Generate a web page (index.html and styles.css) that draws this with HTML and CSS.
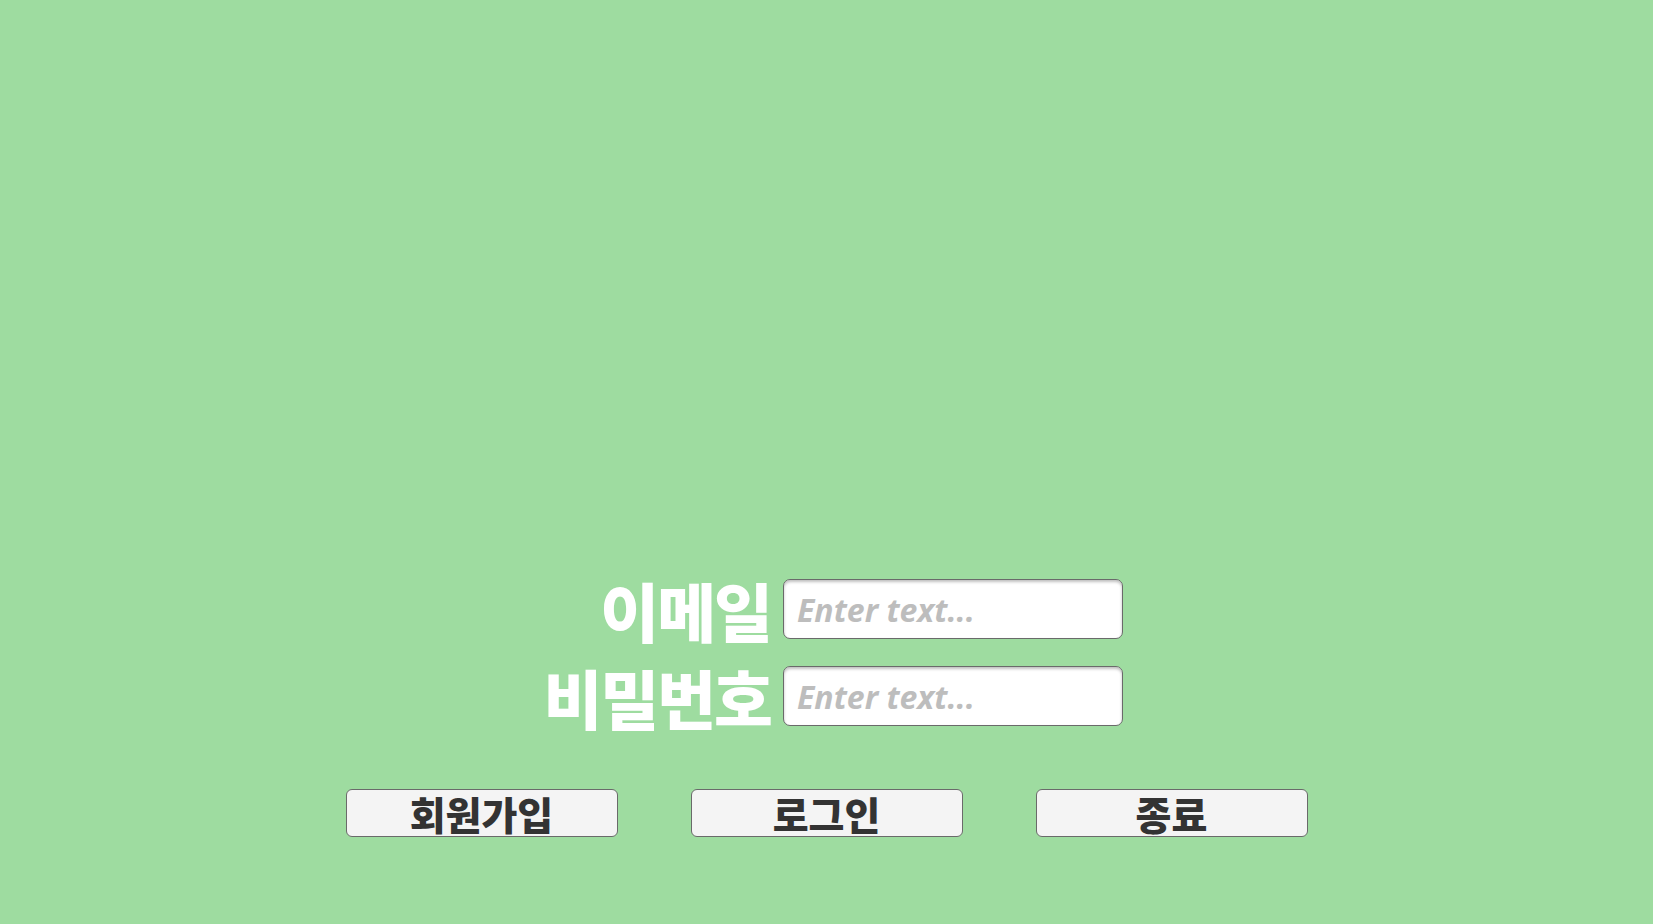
FILE: index.html
```html
<!DOCTYPE html>
<html lang="ko">
<head>
<meta charset="utf-8">
<title>로그인</title>
<link rel="stylesheet" href="styles.css">
</head>
<body>
<main class="screen">
  <form class="login-form">
    <label class="field-label" for="email">이메일</label>
    <input class="field-input" id="email" type="text" placeholder="Enter text...">
    <label class="field-label" for="pw">비밀번호</label>
    <input class="field-input" id="pw" type="text" placeholder="Enter text...">
  </form>
  <div class="actions">
    <button class="action-btn" type="button">회원가입</button>
    <button class="action-btn" type="button">로그인</button>
    <button class="action-btn" type="button">종료</button>
  </div>
</main>
</body>
</html>
```
FILE: styles.css
```css
html, body {
  margin: 0;
  padding: 0;
  background: #9edca0;
}
.screen {
  width: 1653px;
  height: 924px;
  box-sizing: border-box;
  padding-top: 579px;
  display: flex;
  flex-direction: column;
  font-family: "Noto Sans CJK KR", "Noto Sans", sans-serif;
}
.login-form {
  display: grid;
  grid-template-columns: 771px 340px;
  grid-auto-rows: 60px;
  column-gap: 12px;
  row-gap: 27px;
  margin: 0;
}
.field-label {
  justify-self: end;
  align-self: center;
  color: #ffffff;
  font-size: 64px;
  font-weight: 900;
  letter-spacing: -2px;
  line-height: 1;
}
.field-input {
  box-sizing: border-box;
  width: 340px;
  height: 60px;
  border: 1.5px solid #6a6a6a;
  border-radius: 7px;
  background: #ffffff;
  box-shadow: inset 0 2px 3px rgba(0,0,0,0.25);
  padding: 0 13px;
  font-family: "Open Sans", "Noto Sans", sans-serif;
  font-size: 32px;
  font-style: italic;
  font-weight: 700;
  color: #333;
  outline: none;
}
.field-input::placeholder {
  color: #bdbdbd;
}
.actions {
  display: flex;
  justify-content: center;
  gap: 73px;
  margin-top: 63px;
}
.action-btn {
  box-sizing: border-box;
  width: 272px;
  height: 48px;
  border: 1.5px solid #6a6a6a;
  border-radius: 6px;
  background: #f4f4f4;
  color: #333333;
  font-family: "Noto Sans CJK KR", "Noto Sans", sans-serif;
  font-size: 39px;
  font-weight: 900;
  line-height: 1;
  padding: 0;
  display: flex;
  align-items: center;
  justify-content: center;
}
```
